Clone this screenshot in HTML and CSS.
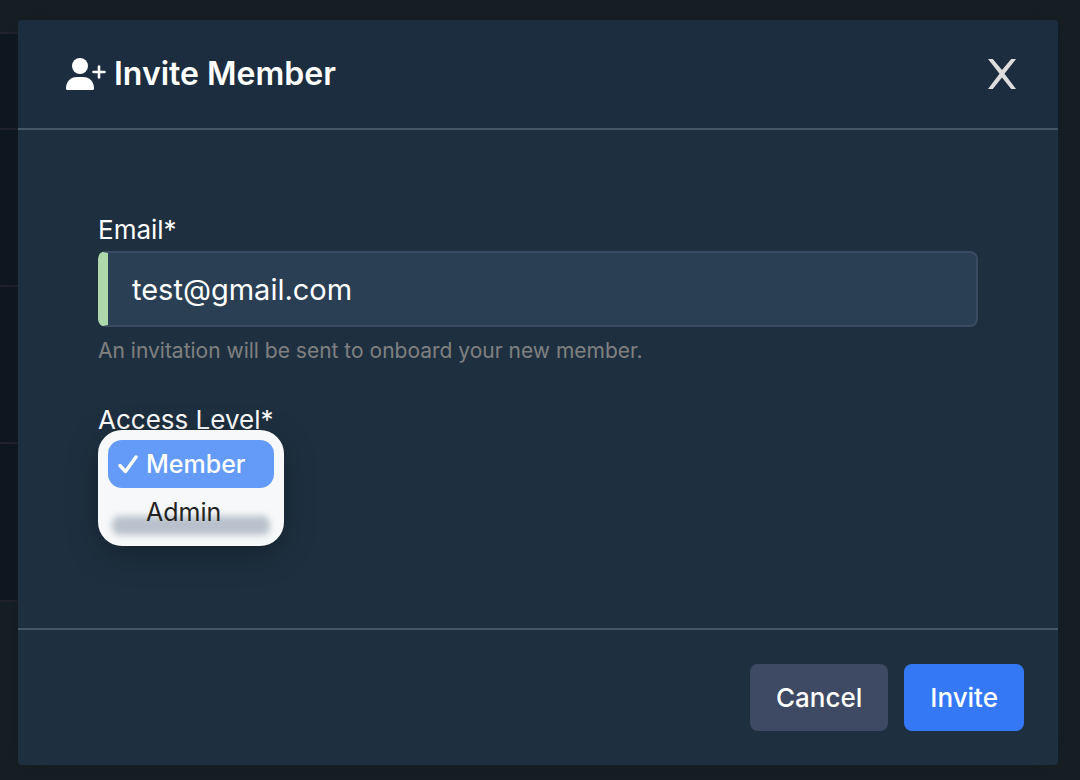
FILE: index.html
```
<!DOCTYPE html>
<html lang="en">
<head>
    <meta charset="UTF-8">
    <meta name="viewport" content="width=device-width, initial-scale=1.0">
    <title>Invite Member</title>
    <link rel="stylesheet" href="styles.css">
</head>
<body>
    <div class="page">
        <div class="page-top"></div>
        <div class="page-head"></div>
        <div class="page-row"></div>
        <div class="page-row"></div>
        <div class="page-row"></div>
    </div>

    <div class="overlay">
        <form class="modal" role="dialog" aria-labelledby="modalTitle">
            <div class="modal-header">
                <svg class="title-icon" viewBox="0 0 40 32" aria-hidden="true">
                    <circle cx="14" cy="8" r="8" fill="currentColor"/>
                    <path d="M0 30.500C0 23.500 4.500 19 11 19h6c6.500 0 11 4.500 11 11.500 0 .9-.6 1.500-1.500 1.500h-25C.6 32 0 31.400 0 30.500z" fill="currentColor"/>
                    <path d="M33 8.500v11M27.500 14h11" fill="none" stroke="currentColor" stroke-width="2.600" stroke-linecap="round"/>
                </svg>
                <h1 id="modalTitle">Invite Member</h1>
                <button type="button" class="close-btn" aria-label="Close">
                    <svg viewBox="0 0 28 30" aria-hidden="true">
                        <path d="M0 0h4.800L14 11 23.200 0H28L16.500 14.800 28 30h-4.800L14 18.500 4.800 30H0l11.500-15.200z" fill="currentColor"/>
                    </svg>
                </button>
            </div>

            <div class="modal-body">
                <div class="field">
                    <label for="email">Email*</label>
                    <input type="email" id="email" value="test@gmail.com" required>
                    <p class="help-text">An invitation will be sent to onboard your new member.</p>
                </div>
                <div class="field">
                    <label for="accessLevel">Access Level*</label>
                    <div class="select-wrap">
                        <select id="accessLevel">
                            <option selected>Member</option>
                            <option>Admin</option>
                        </select>
                        <ul class="menu" role="listbox" aria-label="Access Level">
                            <li class="menu-item selected" role="option" aria-selected="true">
                                <svg viewBox="0 0 20 20" aria-hidden="true">
                                    <path d="M2 11.500L7.500 17.500 18 3" fill="none" stroke="currentColor" stroke-width="3.400" stroke-linecap="round" stroke-linejoin="round"/>
                                </svg>
                                <span>Member</span>
                            </li>
                            <li class="menu-item" role="option" aria-selected="false">
                                <span>Admin</span>
                            </li>
                        </ul>
                    </div>
                </div>
            </div>

            <div class="modal-footer">
                <button type="button" class="btn">Cancel</button>
                <button type="submit" class="btn primary">Invite</button>
            </div>
        </form>
    </div>
</body>
</html>
```
FILE: styles.css
```
* {
    margin: 0;
    padding: 0;
    box-sizing: border-box;
}

body {
    display: grid;
    min-height: 100vh;
    font-family: Inter, "Liberation Sans", sans-serif;
    background: #162024;
    color: white;
}

/* page and overlay share the same grid cell */
.page,
.overlay {
    grid-area: 1 / 1;
}

.page {
    margin-right: 40px;
}

.page-top {
    height: 34px;
    border-bottom: 2px solid #23232e;
}

.page-head {
    height: 96px;
    background: #0e1820;
    border-bottom: 2px solid #23232e;
}

.page-row {
    height: 157px;
    background: #0e1820;
    border-bottom: 2px solid #23232e;
}

.page-row:last-child {
    height: 158px;
}

.overlay {
    display: flex;
    padding: 20px 22px 15px 18px;
}

.modal {
    flex: 1;
    display: flex;
    flex-direction: column;
    background: #1e3040;
    border-radius: 4px;
    box-shadow: 0 0 24px rgba(20, 24, 34, 0.7);
}

.modal-header {
    display: flex;
    align-items: center;
    gap: 8px;
    height: 110px;
    padding: 0 42px 0 48px;
    background: #1b2d3e;
    border-bottom: 2px solid #455664;
    border-radius: 4px 4px 0 0;
}

.title-icon {
    width: 40px;
    height: 32px;
}

.modal-header h1 {
    font-size: 32px;
    font-weight: 600;
    line-height: 40px;
}

.close-btn {
    margin-left: auto;
    width: 28px;
    height: 30px;
    border: none;
    background: none;
    color: #dddddd;
    cursor: pointer;
}

.close-btn svg {
    display: block;
    width: 100%;
    height: 100%;
}

.modal-body {
    flex: 1;
    display: flex;
    flex-direction: column;
    gap: 39px;
    padding: 84px 80px 40px;
}

.field label {
    display: block;
    font-size: 26px;
    line-height: 32px;
    margin-bottom: 5px;
}

.field input {
    display: block;
    width: 100%;
    height: 76px;
    padding: 0 24px;
    border: 2px solid #3d4a63;
    border-left: 10px solid #aed8ac;
    border-radius: 8px;
    background: #2a3f54;
    color: white;
    font-family: inherit;
    font-size: 29px;
    outline: none;
}

.help-text {
    margin-top: 10px;
    font-size: 21px;
    line-height: 28px;
    color: #808080;
}

.select-wrap {
    position: relative;
    width: 186px;
}

.select-wrap select {
    width: 100%;
    height: 76px;
    border: 2px solid #3d4a63;
    border-radius: 8px;
    background: #2a3f54;
    color: white;
    font: inherit;
    font-size: 26px;
}

.menu {
    position: absolute;
    top: -11px;
    left: 0;
    width: 100%;
    padding: 10px;
    list-style: none;
    border-radius: 24px;
    background: #f6f8f9;
    box-shadow: 0 8px 32px rgba(0, 0, 0, 0.3);
}

/* blurred edge of the field showing through the menu */
.menu::before {
    content: "";
    position: absolute;
    left: 14px;
    right: 14px;
    bottom: 11px;
    height: 19px;
    border-radius: 8px;
    background: #b9c2cc;
    filter: blur(3px);
}

.menu-item {
    position: relative;
    display: flex;
    align-items: center;
    height: 48px;
    padding-left: 38px;
    border-radius: 14px;
    font-size: 25px;
    color: #222222;
    cursor: pointer;
}

.menu-item.selected {
    gap: 8px;
    padding-left: 10px;
    background: #659bf8;
    color: white;
    font-weight: 500;
}

.menu-item svg {
    width: 20px;
    height: 20px;
}

.modal-footer {
    display: flex;
    justify-content: flex-end;
    gap: 16px;
    padding: 34px;
    border-top: 2px solid #455664;
}

.btn {
    height: 67px;
    padding: 0 26px;
    border: none;
    border-radius: 8px;
    background: #3e4a63;
    color: white;
    font-family: inherit;
    font-size: 26px;
    font-weight: 500;
    cursor: pointer;
}

.btn.primary {
    background: #3478f6;
}
```
